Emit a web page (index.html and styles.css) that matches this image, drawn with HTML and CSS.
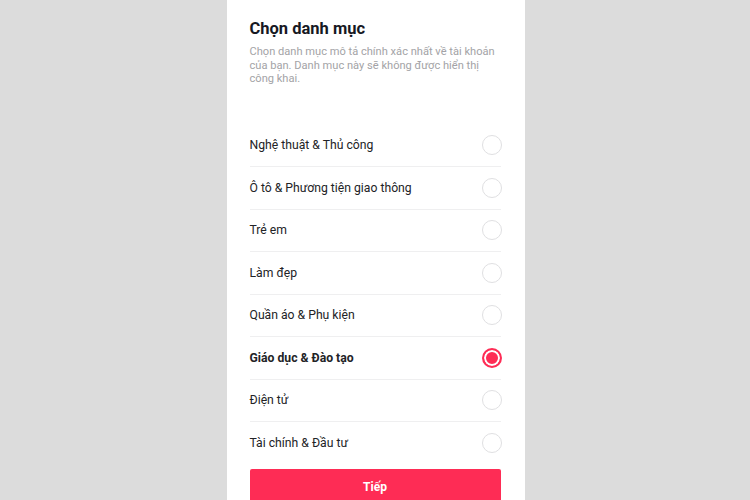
FILE: index.html
```html
<!DOCTYPE html>
<html lang="vi">
<head>
<meta charset="utf-8">
<link rel="stylesheet" href="styles.css">
</head>
<body>
<div class="page">
  <div class="panel">
    <h1 class="title">Chọn danh mục</h1>
    <p class="desc">Chọn danh mục mô tả chính xác nhất về tài khoản của bạn. Danh mục này sẽ không được hiển thị công khai.</p>
    <ul class="list">
      <li class="row"><span>Nghệ thuật &amp; Thủ công</span><span class="radio"></span></li>
      <li class="row"><span>Ô tô &amp; Phương tiện giao thông</span><span class="radio"></span></li>
      <li class="row"><span>Trẻ em</span><span class="radio"></span></li>
      <li class="row"><span>Làm đẹp</span><span class="radio"></span></li>
      <li class="row"><span>Quần áo &amp; Phụ kiện</span><span class="radio"></span></li>
      <li class="row selected"><span>Giáo dục &amp; Đào tạo</span><span class="radio on"></span></li>
      <li class="row"><span>Điện tử</span><span class="radio"></span></li>
      <li class="row last"><span>Tài chính &amp; Đầu tư</span><span class="radio"></span></li>
    </ul>
    <button class="btn">Tiếp</button>
  </div>
</div>
</body>
</html>
```

FILE: styles.css
```css
html, body {
  margin: 0;
  padding: 0;
}
body {
  width: 750px;
  height: 500px;
  overflow: hidden;
  background: #dcdcdc;
  font-family: Roboto, "Noto Sans", sans-serif;
}
.page {
  display: flex;
  justify-content: center;
  height: 500px;
}
.panel {
  width: 298px;
  margin-left: 1px;
  background: #fff;
  padding: 18px 24px 0 23px;
  box-sizing: border-box;
  height: 500px;
}
.title {
  margin: 0;
  font-size: 16.5px;
  font-weight: 700;
  color: #161823;
  line-height: 22px;
}
.desc {
  margin: 5px 0 0;
  font-size: 11.1px;
  line-height: 13.5px;
  color: #a3a3a6;
}
.list {
  list-style: none;
  margin: 39px 0 0;
  padding: 0;
}
.row {
  display: flex;
  align-items: center;
  justify-content: space-between;
  height: 42.5px;
  border-bottom: 1px solid #efeff0;
  box-sizing: border-box;
  font-size: 12.2px;
  color: #222326;
}
.row.last {
  border-bottom: none;
}
.row.selected {
  font-weight: 700;
}
.radio {
  width: 20px;
  height: 20px;
  border: 1px solid #e0e0e2;
  border-radius: 50%;
  box-sizing: border-box;
  margin-right: -1px;
}
.radio.on {
  border: 2px solid #fe2c55;
  background: #fe2c55;
  box-shadow: inset 0 0 0 2px #fff;
}
.btn {
  display: block;
  width: 100%;
  height: 36px;
  margin-top: 4px;
  border: none;
  border-radius: 2px;
  background: #fe2c55;
  color: #fff;
  font-family: Roboto, "Noto Sans", sans-serif;
  font-weight: 700;
  font-size: 12px;
  padding: 0;
}
```
